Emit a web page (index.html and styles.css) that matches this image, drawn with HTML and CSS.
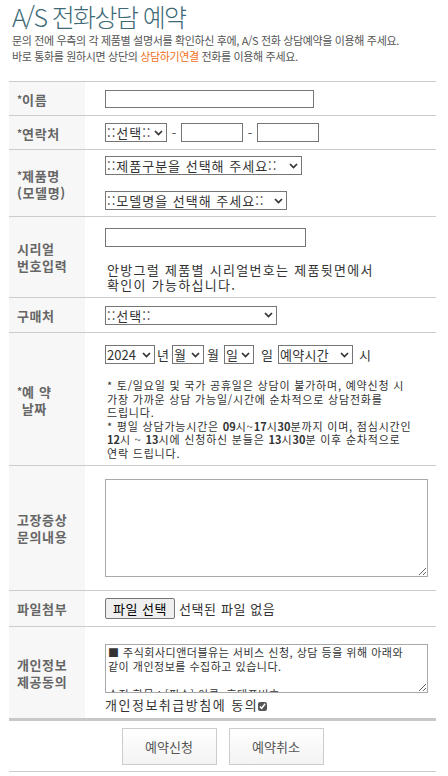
FILE: index.html
```html
<!DOCTYPE html>
<html lang="ko">
<head>
<meta charset="utf-8">
<title>A/S 전화상담 예약</title>
<link rel="stylesheet" href="styles.css">
</head>
<body>
<div class="page">
  <div class="head">
    <h1 class="title">A/S 전화상담 예약</h1>
    <p class="desc">문의 전에 우측의 각 제품별 설명서를 확인하신 후에, A/S 전화 상담예약을 이용해 주세요.<br>바로 통화를 원하시면 상단의 <span class="hl">상담하기연결</span> 전화를 이용해 주세요.</p>
  </div>

  <div class="form">
    <div class="row r1">
      <div class="lab"><span class="lt"><span class="ast">*</span>이름</span></div>
      <div class="val"><input class="in in-name" type="text"></div>
    </div>
    <div class="row r2">
      <div class="lab"><span class="lt"><span class="ast">*</span>연락처</span></div>
      <div class="val line">
        <select class="sel sel-phone"><option>::선택::</option></select>
        <span class="dash">-</span>
        <input class="in in-tel" type="text">
        <span class="dash">-</span>
        <input class="in in-tel" type="text">
      </div>
    </div>
    <div class="row r3">
      <div class="lab"><span class="lt"><span class="ast">*</span>제품명<br>(모델명)</span></div>
      <div class="val col gap16">
        <select class="sel sel-cat"><option>::제품구분을 선택해 주세요::</option></select>
        <select class="sel sel-model"><option>::모델명을 선택해 주세요::</option></select>
      </div>
    </div>
    <div class="row r4">
      <div class="lab"><span class="lt">시리얼<br>번호입력</span></div>
      <div class="val col serial">
        <input class="in in-serial" type="text">
        <p class="help">안방그럴 제품별 시리얼번호는 제품뒷면에서<br>확인이 가능하십니다.</p>
      </div>
    </div>
    <div class="row r5">
      <div class="lab"><span class="lt">구매처</span></div>
      <div class="val"><select class="sel sel-shop"><option>::선택::</option></select></div>
    </div>
    <div class="row r6">
      <div class="lab"><span class="lt ctr"><span class="ast">*</span>예 약<br>날짜</span></div>
      <div class="val col date">
        <div class="line dates">
          <select class="sel sel-year"><option>2024</option></select><span class="u1">년</span>
          <select class="sel sel-month"><option>월</option></select><span class="u2">월</span>
          <select class="sel sel-day"><option>일</option></select><span class="u3">일</span>
          <select class="sel sel-time"><option>예약시간</option></select><span class="u4">시</span>
        </div>
        <p class="note">* 토/일요일 및 국가 공휴일은 상담이 불가하며, 예약신청 시<br>가장 가까운 상담 가능일/시간에 순차적으로 상담전화를<br>드립니다.<br>* 평일 상담가능시간은 <b>09</b>시~<b>17</b>시<b>30</b>분까지 이며, 점심시간인<br><b>12</b>시 ~ <b>13</b>시에 신청하신 분들은 <b>13</b>시<b>30</b>분 이후 순차적으로<br>연락 드립니다.</p>
      </div>
    </div>
    <div class="row r7">
      <div class="lab"><span class="lt">고장증상<br>문의내용</span></div>
      <div class="val"><textarea class="ta ta-main"></textarea></div>
    </div>
    <div class="row r8">
      <div class="lab"><span class="lt">파일첨부</span></div>
      <div class="val line">
        <button class="filebtn" type="button">파일 선택</button>
        <span class="filetxt">선택된 파일 없음</span>
      </div>
    </div>
    <div class="row r9">
      <div class="lab"><span class="lt">개인정보<br>제공동의</span></div>
      <div class="val col privacy">
        <textarea class="ta ta-priv" readonly>■ 주식회사디앤더블유는 서비스 신청, 상담 등을 위해 아래와
같이 개인정보를 수집하고 있습니다.

수집 항목 : [필수] 이름, 휴대폰번호
수집 목적 : 서비스 신청 및 상담
보유 기간 : 상담 완료 후 1년</textarea>
        <label class="agree">개인정보취급방침에 동의<input class="chk" type="checkbox" checked></label>
      </div>
    </div>
  </div>

  <div class="btns">
    <button class="btn" type="button">예약신청</button>
    <button class="btn" type="button">예약취소</button>
  </div>
</div>
</body>
</html>
```

FILE: styles.css
```css
* { box-sizing: border-box; }
html, body { margin: 0; padding: 0; background: #fff; }
body {
  font-family: "Noto Sans CJK KR", "Noto Sans", "Liberation Sans", sans-serif;
  color: #333;
  width: 448px;
}
.page { padding: 0 12px 0 9px; }

.head { padding-left: 3px; }
.title {
  margin: 0;
  font-size: 25px;
  font-weight: 300;
  letter-spacing: -1.6px;
  line-height: 32px;
  color: #3e6a78;
}
.desc {
  margin: 0;
  font-size: 11px;
  line-height: 16px;
  letter-spacing: -0.35px;
  color: #555;
}
.hl { color: #f36f21; }

.form {
  margin-top: 17px;
  border-top: 1px solid #ccc;
  width: 427px;
}
.row {
  display: flex;
  border-bottom: 1px solid #ccc;
}
.r1 { height: 34px; }
.r2 { height: 34px; }
.r3 { height: 67px; }
.r4 { height: 81px; }
.r5 { height: 35px; }
.r6 { height: 133px; }
.r7 { height: 125px; }
.r8 { height: 36px; }
.r9 { height: 94px; border-bottom: 3px solid #c8c8c8; }

.lab {
  width: 76px;
  flex: none;
  background: #f7f7f7;
  padding-left: 8px;
  display: flex;
  align-items: center;
  font-size: 13px;
  font-weight: 700;
  line-height: 17px;
  letter-spacing: 0.6px;
  color: #666;
}
.lt { display: block; }
.lt.ctr { text-align: center; }
.ast { font-size: 10px; vertical-align: 2px; letter-spacing: 0; }

.val {
  flex: 1;
  padding-left: 20px;
  display: flex;
  align-items: center;
  font-size: 13px;
  color: #333;
}
.val.col { flex-direction: column; align-items: flex-start; justify-content: center; }
.gap16 { gap: 16px; }
.line { display: flex; align-items: center; }

.in {
  height: 19px;
  border: 1px solid #767676;
  border-radius: 0;
  padding: 0 2px;
  font: inherit;
  font-size: 13px;
  margin: 0;
}
.in-name { width: 209px; height: 18px; }
.in-tel { width: 62px; }
.in-serial { width: 201px; }

.sel {
  -webkit-appearance: none;
  appearance: none;
  height: 19px;
  border: 1px solid #767676;
  border-radius: 0;
  padding: 0 12px 0 1px;
  margin: 0;
  font-family: "Noto Sans CJK KR", "Noto Sans", sans-serif;
  font-size: 13px;
  line-height: 17px;
  letter-spacing: 1px;
  color: #333;
  background: #fff url("data:image/svg+xml;utf8,<svg xmlns='http://www.w3.org/2000/svg' width='9' height='6' viewBox='0 0 9 6'><path d='M1 1l3.5 3.5L8 1' fill='none' stroke='%23333' stroke-width='1.7'/></svg>") no-repeat right 3px center;
  background-size: 9px 6px;
}
.sel-phone { width: 62px; }
.sel-cat { width: 197px; }
.sel-model { width: 182px; }
.sel-shop { width: 172px; }
.sel-year { width: 50px; letter-spacing: 0; }
.sel-month { width: 32px; }
.sel-day { width: 30px; }
.sel-time { width: 75px; letter-spacing: 0.3px; }

.dash { width: 14px; text-align: center; color: #555; }

.serial { justify-content: flex-start; padding-top: 6px; }
.help {
  margin: 15px 0 0 2px;
  font-size: 13px;
  line-height: 15px;
  letter-spacing: 1.3px;
  color: #333;
}

.date { justify-content: flex-start; padding-top: 7px; }
.dates span { color: #333; }
.u1 { margin: 0 3px 0 2px; }
.u2 { margin: 0 5px 0 3px; }
.u3 { margin: 0 5px 0 7px; }
.u4 { margin-left: 6px; }
.note {
  margin: 15px 0 0 2px;
  font-size: 11px;
  line-height: 13.5px;
  letter-spacing: 0.8px;
  color: #333;
  white-space: nowrap;
}
.note b { font-weight: 700; letter-spacing: 0; }

.ta {
  border: 1px solid #a9a9a9;
  border-radius: 0;
  margin: 0;
  font-family: "Noto Sans CJK KR", "Noto Sans", sans-serif;
  color: #333;
}
.ta-main { width: 323px; height: 98px; resize: both; }

.filebtn {
  height: 21px;
  width: 70px;
  padding: 0;
  margin: 0;
  border: 1px solid #767676;
  border-radius: 2px;
  background: #efefef;
  font-family: "Noto Sans CJK KR", sans-serif;
  font-size: 13px;
  letter-spacing: 0.5px;
  color: #000;
}
.filetxt { margin-left: 4px; color: #333; letter-spacing: 0.6px; }

.privacy { justify-content: flex-start; padding-top: 13px; }
.ta-priv {
  width: 323px;
  height: 49px;
  padding: 0 2px;
  font-size: 11px;
  line-height: 14px;
  letter-spacing: 0.5px;
  overflow-y: scroll;
  white-space: pre;
  resize: both;
}
.ta-priv::-webkit-scrollbar { width: 16px; background: #fff; }
.ta-priv::-webkit-scrollbar-track { background: #fff; }
.ta-priv::-webkit-scrollbar-thumb {
  background: linear-gradient(#fff 0, #fff 45%, #8a8a8a 45%, #8a8a8a 60%, #fff 60%);
  border-left: 4px solid #fff;
  border-right: 3px solid #fff;
}
.ta-priv::-webkit-scrollbar-button:vertical:start:decrement,
.ta-priv::-webkit-scrollbar-button:vertical:end:increment {
  display: block;
  height: 12px;
  background-color: #fff;
  background-repeat: no-repeat;
  background-position: center;
}
.ta-priv::-webkit-scrollbar-button:vertical:start:decrement {
  background-image: url("data:image/svg+xml;utf8,<svg xmlns='http://www.w3.org/2000/svg' width='8' height='5'><path d='M0 5L4 0L8 5Z' fill='%23888'/></svg>");
}
.ta-priv::-webkit-scrollbar-button:vertical:end:increment {
  background-image: url("data:image/svg+xml;utf8,<svg xmlns='http://www.w3.org/2000/svg' width='8' height='5'><path d='M0 0L8 0L4 5Z' fill='%23888'/></svg>");
}
.ta-priv::-webkit-scrollbar-corner { background: #fff; }

.agree {
  margin-top: 3px;
  display: flex;
  align-items: center;
  font-size: 13px;
  line-height: 18px;
  letter-spacing: 1.5px;
  color: #333;
}
.chk {
  width: 9px;
  height: 9px;
  margin: 2px 0 0 0;
  accent-color: #555;
}

.btns {
  width: 427px;
  display: flex;
  justify-content: center;
  gap: 12px;
  padding: 7px 0 6px;
  border-bottom: 1px solid #ccc;
}
.btn {
  width: 95px;
  height: 37px;
  border: 1px solid #ccc;
  border-radius: 0;
  background: linear-gradient(#ffffff, #f3f3f3);
  font-family: "Noto Sans CJK KR", sans-serif;
  font-size: 13px;
  color: #555;
}
```
